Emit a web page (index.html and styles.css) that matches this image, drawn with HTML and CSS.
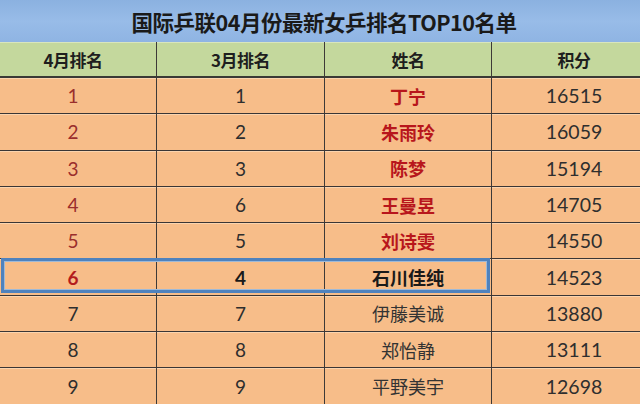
FILE: index.html
```html
<!DOCTYPE html>
<html lang="zh">
<head>
<meta charset="utf-8">
<title>国际乒联04月份最新女乒排名TOP10名单</title>
<link rel="stylesheet" href="styles.css">
</head>
<body>
<div class="sheet">
  <div class="title">国际乒联04月份最新女乒排名TOP10名单</div>
  <div class="row head">
    <div class="cell c1">4月排名</div>
    <div class="cell c2">3月排名</div>
    <div class="cell c3">姓名</div>
    <div class="cell c4">积分</div>
  </div>
  <div class="row">
    <div class="cell c1 red">1</div><div class="cell c2">1</div><div class="cell c3 name-red">丁宁</div><div class="cell c4">16515</div>
  </div>
  <div class="row">
    <div class="cell c1 red">2</div><div class="cell c2">2</div><div class="cell c3 name-red">朱雨玲</div><div class="cell c4">16059</div>
  </div>
  <div class="row">
    <div class="cell c1 red">3</div><div class="cell c2">3</div><div class="cell c3 name-red">陈梦</div><div class="cell c4">15194</div>
  </div>
  <div class="row">
    <div class="cell c1 red">4</div><div class="cell c2">6</div><div class="cell c3 name-red">王曼昱</div><div class="cell c4">14705</div>
  </div>
  <div class="row">
    <div class="cell c1 red">5</div><div class="cell c2">5</div><div class="cell c3 name-red">刘诗雯</div><div class="cell c4">14550</div>
  </div>
  <div class="row highlight">
    <div class="cell c1 red bold">6</div><div class="cell c2 bold">4</div><div class="cell c3 name-bold">石川佳纯</div><div class="cell c4">14523</div>
    <div class="select-box"></div>
  </div>
  <div class="row">
    <div class="cell c1">7</div><div class="cell c2">7</div><div class="cell c3 name">伊藤美诚</div><div class="cell c4">13880</div>
  </div>
  <div class="row">
    <div class="cell c1">8</div><div class="cell c2">8</div><div class="cell c3 name">郑怡静</div><div class="cell c4">13111</div>
  </div>
  <div class="row">
    <div class="cell c1">9</div><div class="cell c2">9</div><div class="cell c3 name">平野美宇</div><div class="cell c4">12698</div>
  </div>
</div>
</body>
</html>
```
FILE: styles.css
```css
html, body {
  margin: 0;
  padding: 0;
  background: #f7bd89;
}
.sheet {
  width: 640px;
  height: 404px;
  overflow: hidden;
  font-family: Lato, "Noto Sans CJK SC", sans-serif;
}
.title {
  height: 42px;
  display: flex;
  align-items: center;
  justify-content: center;
  background: linear-gradient(#8bb1e0, #98bce8 50%, #8fb4e3);
  font-family: "Noto Sans CJK SC", sans-serif;
  font-weight: 700;
  font-size: 21.5px;
  color: #1a1a1a;
  letter-spacing: -0.5px;
  padding-left: 8px;
  box-sizing: border-box;
}
.row {
  position: relative;
  display: grid;
  grid-template-columns: 157px 168px 167px 148px;
  height: 36.3px;
  box-sizing: border-box;
  border-bottom: 1.5px solid #3a3636;
  box-shadow: inset 0 1px 0 #fbd4ae;
  background: #f7bd89;
}
.row.head {
  height: 36px;
  background: #c4d89d;
  box-shadow: inset 0 1px 0 #d9e6bd;
  border-bottom: 2px solid #3a3a36;
}
.cell {
  display: flex;
  align-items: center;
  justify-content: center;
  border-right: 1.5px solid #3d3a38;
  font-size: 19px;
  color: #2e2e2e;
  box-sizing: border-box;
}
.cell.c4 {
  border-right: none;
  padding-left: 16px;
  font-size: 19.5px;
}
.cell.c1 {
  padding-right: 10px;
}
.head .cell {
  font-family: "Noto Sans CJK SC", sans-serif;
  font-weight: 700;
  font-size: 17px;
  color: #1e1e1e;
  letter-spacing: -0.5px;
}
.red {
  color: #9a2e2c;
}
.bold {
  font-weight: 700;
}
.red.bold {
  color: #b31c1c;
}
.c2.bold {
  color: #1a1a1a;
}
.name, .name-red, .name-bold {
  font-family: "Noto Sans CJK SC", sans-serif;
  font-size: 18px;
}
.name {
  color: #333;
}
.name-red {
  color: #b8161c;
  font-weight: 700;
}
.name-bold {
  color: #1a1a1a;
  font-weight: 700;
}
.select-box {
  position: absolute;
  left: 1px;
  top: -1px;
  width: 489px;
  height: 35px;
  border: 3px solid #4f82bd;
  box-sizing: border-box;
  box-shadow: inset 0 0 0 1px #9fb9d6;
  pointer-events: none;
}
```
